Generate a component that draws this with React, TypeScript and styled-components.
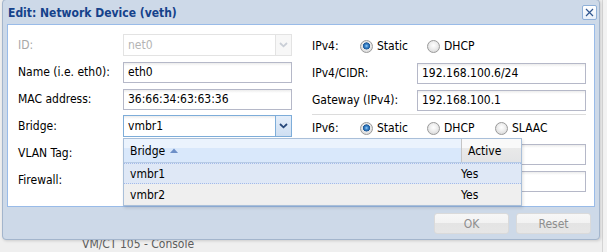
import React from "react";
import styled, { createGlobalStyle } from "styled-components";

const Global = createGlobalStyle`
  html, body { margin: 0; padding: 0; }
  body {
    width: 607px;
    height: 252px;
    overflow: hidden;
    background: #efefef;
    font-family: "DejaVu Sans Condensed", Tahoma, "Liberation Sans", sans-serif;
    font-size: 12px;
    color: #000;
  }
`;

const Desktop = styled.div`
  position: relative;
  width: 607px;
  height: 252px;
  overflow: hidden;
  display: flex;
  background: #efefef;
`;

const BackMain = styled.div`
  flex: 1;
  display: flex;
  flex-direction: column;
  justify-content: flex-end;
  padding: 0 0 0 82px;
`;

const BackText = styled.div`
  font-size: 12px;
  line-height: 14px;
  color: #5e5e5e;
  margin-bottom: 1px;
`;

const BackStrip = styled.div`
  width: 4px;
  border-left: 1px solid #d4d4d4;
  background: #f2f2f2;
`;

const Window = styled.div`
  position: absolute;
  left: 2px;
  top: -1px;
  width: 598px;
  height: 241px;
  box-sizing: border-box;
  background: #cdd9e8;
  border: 1px solid #a3b5cc;
  border-radius: 4px;
  box-shadow: 1px 1px 3px rgba(0, 0, 0, 0.15);
  display: flex;
  flex-direction: column;
`;

const TitleBar = styled.div`
  height: 24px;
  display: flex;
  align-items: center;
  justify-content: space-between;
  padding: 0 2px 0 5px;
  box-sizing: border-box;
`;

const Title = styled.div`
  font-weight: bold;
  font-size: 12px;
  color: #15428b;
  padding-top: 1px;
`;

const CloseTool = styled.button`
  width: 15px;
  height: 15px;
  padding: 0;
  margin: 0;
  border: 1px solid #8fb0d8;
  border-radius: 2px;
  background: linear-gradient(#ffffff, #e8f0fa);
  display: flex;
  align-items: center;
  justify-content: center;
`;

const Body = styled.div`
  height: 183px;
  margin: 0 4px;
  box-sizing: border-box;
  background: #fff;
  border: 1px solid #99bbe8;
  display: grid;
  grid-template-columns: 274px 274px;
  column-gap: 20px;
  padding: 0 8px 0 10px;
`;

const Column = styled.div<{ $top: number }>`
  display: flex;
  flex-direction: column;
  padding-top: ${(p) => p.$top}px;
`;

const Row = styled.div<{ $gap?: number }>`
  display: flex;
  align-items: center;
  height: 22px;
  margin-bottom: ${(p) => (p.$gap ?? 5)}px;
`;

const Label = styled.div<{ $w?: number; $disabled?: boolean }>`
  width: ${(p) => p.$w ?? 105}px;
  flex: none;
  color: ${(p) => (p.$disabled ? "#a7a7a7" : "#000")};
  white-space: nowrap;
`;

const TextField = styled.div<{ $disabled?: boolean; $focus?: boolean }>`
  width: 169px;
  height: 21px;
  box-sizing: border-box;
  border: 1px solid
    ${(p) => (p.$disabled ? "#e3e3e3" : p.$focus ? "#7eadd9" : "#b5b8c8")};
  background: ${(p) =>
    p.$disabled ? "#fff" : "linear-gradient(#ececec 0, #fff 3px, #fff)"};
  color: ${(p) => (p.$disabled ? "#b4b4b4" : "#000")};
  display: flex;
  align-items: center;
  padding-left: 4px;
  white-space: nowrap;
`;

const ComboWrap = styled.div`
  position: relative;
  display: flex;
  width: 169px;
  height: 22px;
`;

const ComboInput = styled.div<{ $disabled?: boolean; $focus?: boolean }>`
  flex: 1;
  height: 22px;
  box-sizing: border-box;
  border: 1px solid
    ${(p) => (p.$disabled ? "#e3e3e3" : p.$focus ? "#7eadd9" : "#b5b8c8")};
  border-right: none;
  background: ${(p) =>
    p.$disabled ? "#fff" : "linear-gradient(#ececec 0, #fff 3px, #fff)"};
  color: ${(p) => (p.$disabled ? "#b4b4b4" : "#000")};
  display: flex;
  align-items: center;
  padding-left: 4px;
`;

const Trigger = styled.div<{ $disabled?: boolean; $focus?: boolean }>`
  width: 17px;
  height: 22px;
  box-sizing: border-box;
  border: 1px solid
    ${(p) => (p.$disabled ? "#e3e3e3" : p.$focus ? "#7eadd9" : "#b5b8c8")};
  background: ${(p) =>
    p.$disabled
      ? "#f7f7f7"
      : p.$focus
      ? "linear-gradient(#e4eefa, #cfdff2)"
      : "linear-gradient(#fafafa, #e6e9ee)"};
  display: flex;
  align-items: center;
  justify-content: center;
`;

const RadioItem = styled.div<{ $w: number }>`
  width: ${(p) => p.$w}px;
  display: flex;
  align-items: center;
  gap: 4px;
`;

const RadioDot = styled.span<{ $checked?: boolean }>`
  width: 13px;
  height: 13px;
  box-sizing: border-box;
  border-radius: 50%;
  border: 1px solid #9a9a9a;
  background: ${(p) =>
    p.$checked
      ? "radial-gradient(circle at 50% 45%, #9fd0f5 0, #3f8ad0 1.5px, #1c5796 3.3px, #e9e9e9 3.8px, #d2d2d2 100%)"
      : "radial-gradient(circle at 50% 40%, #ffffff 0, #ededed 45%, #cfcfcf 100%)"};
  flex: none;
`;

const Separator = styled.div`
  height: 1px;
  background: #dcdcdc;
  margin: -2px 0 2px 0;
`;

const CheckBox = styled.span`
  width: 13px;
  height: 13px;
  box-sizing: border-box;
  border: 1px solid #9a9a9a;
  background: linear-gradient(#fff, #ddd);
  margin-left: 5px;
`;

const DropList = styled.div`
  position: absolute;
  top: calc(100% + 1px);
  left: 0;
  width: 399px;
  box-sizing: border-box;
  border: 1px solid #a9bfd9;
  background: #fff;
  z-index: 5;
  box-shadow: 1px 2px 3px rgba(0, 0, 0, 0.12);
`;

const GridHeader = styled.div`
  display: flex;
  height: 23px;
  border-bottom: 1px solid #b7cbe5;
`;

const HeaderCell = styled.div<{ $sorted?: boolean; $w?: number }>`
  ${(p) => (p.$w ? `width: ${p.$w}px; flex: none;` : "flex: 1;")}
  display: flex;
  align-items: center;
  gap: 5px;
  padding-left: 6px;
  box-sizing: border-box;
  border-left: ${(p) => (p.$sorted ? "none" : "1px solid #c5c5c5")};
  background: ${(p) =>
    p.$sorted
      ? "linear-gradient(#ebf3fd, #ebf3fd 40%, #d9e8fb 40%, #d9e8fb)"
      : "linear-gradient(#f9f9f9, #f9f9f9 40%, #e9e9e9 40%, #e3e4e6)"};
`;

const GridRow = styled.div<{ $selected?: boolean }>`
  display: flex;
  height: 21px;
  box-sizing: border-box;
  background: ${(p) => (p.$selected ? "#dfe8f6" : "#efefef")};
  border-bottom: 1px ${(p) => (p.$selected ? "dotted #a3bae9" : "solid #ededed")};
  border-top: 1px ${(p) => (p.$selected ? "dotted #a3bae9" : "solid transparent")};
`;

const Cell = styled.div<{ $w?: number }>`
  ${(p) => (p.$w ? `width: ${p.$w}px; flex: none;` : "flex: 1;")}
  display: flex;
  align-items: center;
  padding-left: 6px;
`;

const Footer = styled.div`
  flex: 1;
  display: flex;
  justify-content: flex-end;
  align-items: flex-start;
  gap: 7px;
  padding: 6px 8px 0 0;
`;

const Button = styled.button`
  width: 75px;
  height: 21px;
  box-sizing: border-box;
  border: 1px solid #dadada;
  border-radius: 3px;
  background: linear-gradient(#f7f7f7, #f2f2f2 50%, #e4e4e4 50%, #e6e6e6);
  color: #8e8e8e;
  font-family: inherit;
  font-size: 12px;
  padding: 0;
`;

const Chevron = ({ color }: { color: string }) => (
  <svg width="9" height="6" viewBox="0 0 9 6">
    <path d="M1 1 L4.5 4.3 L8 1" fill="none" stroke={color} strokeWidth="1.8" />
  </svg>
);

const SortUp = () => (
  <svg width="8" height="5" viewBox="0 0 8 5">
    <path d="M0 5 L4 0.5 L8 5 Z" fill="#6d8fc7" />
  </svg>
);

const CloseIcon = () => (
  <svg width="11" height="11" viewBox="0 0 11 11">
    <path d="M2 2 L9 9 M9 2 L2 9" stroke="#30568f" strokeWidth="1.2" />
  </svg>
);

export default function App() {
  return (
    <>
      <Global />
      <Desktop>
        <BackMain>
          <BackText>VM/CT 105 - Console</BackText>
        </BackMain>
        <BackStrip />
        <Window>
          <TitleBar>
            <Title>Edit: Network Device (veth)</Title>
            <CloseTool>
              <CloseIcon />
            </CloseTool>
          </TitleBar>
          <Body>
            <Column $top={9}>
              <Row>
                <Label $disabled>ID:</Label>
                <ComboWrap>
                  <ComboInput $disabled>net0</ComboInput>
                  <Trigger $disabled>
                    <Chevron color="#c9ced6" />
                  </Trigger>
                </ComboWrap>
              </Row>
              <Row>
                <Label>Name (i.e. eth0):</Label>
                <TextField>eth0</TextField>
              </Row>
              <Row>
                <Label>MAC address:</Label>
                <TextField>36:66:34:63:63:36</TextField>
              </Row>
              <Row>
                <Label>Bridge:</Label>
                <ComboWrap>
                  <ComboInput $focus>vmbr1</ComboInput>
                  <Trigger $focus>
                    <Chevron color="#28487a" />
                  </Trigger>
                  <DropList>
                    <GridHeader>
                      <HeaderCell $sorted>
                        Bridge <SortUp />
                      </HeaderCell>
                      <HeaderCell $w={60}>Active</HeaderCell>
                    </GridHeader>
                    <GridRow $selected>
                      <Cell>vmbr1</Cell>
                      <Cell $w={60}>Yes</Cell>
                    </GridRow>
                    <GridRow>
                      <Cell>vmbr2</Cell>
                      <Cell $w={60}>Yes</Cell>
                    </GridRow>
                  </DropList>
                </ComboWrap>
              </Row>
              <Row>
                <Label>VLAN Tag:</Label>
                <TextField />
              </Row>
              <Row>
                <Label>Firewall:</Label>
                <CheckBox />
              </Row>
            </Column>
            <Column $top={10}>
              <Row>
                <Label $w={48}>IPv4:</Label>
                <RadioItem $w={67}>
                  <RadioDot $checked />
                  Static
                </RadioItem>
                <RadioItem $w={68}>
                  <RadioDot />
                  DHCP
                </RadioItem>
              </Row>
              <Row>
                <Label>IPv4/CIDR:</Label>
                <TextField>192.168.100.6/24</TextField>
              </Row>
              <Row>
                <Label>Gateway (IPv4):</Label>
                <TextField>192.168.100.1</TextField>
              </Row>
              <Separator />
              <Row $gap={4}>
                <Label $w={48}>IPv6:</Label>
                <RadioItem $w={67}>
                  <RadioDot $checked />
                  Static
                </RadioItem>
                <RadioItem $w={68}>
                  <RadioDot />
                  DHCP
                </RadioItem>
                <RadioItem $w={68}>
                  <RadioDot />
                  SLAAC
                </RadioItem>
              </Row>
              <Row>
                <Label>IPv6/CIDR:</Label>
                <TextField />
              </Row>
              <Row>
                <Label>Gateway (IPv6):</Label>
                <TextField />
              </Row>
            </Column>
          </Body>
          <Footer>
            <Button>OK</Button>
            <Button>Reset</Button>
          </Footer>
        </Window>
      </Desktop>
    </>
  );
}
